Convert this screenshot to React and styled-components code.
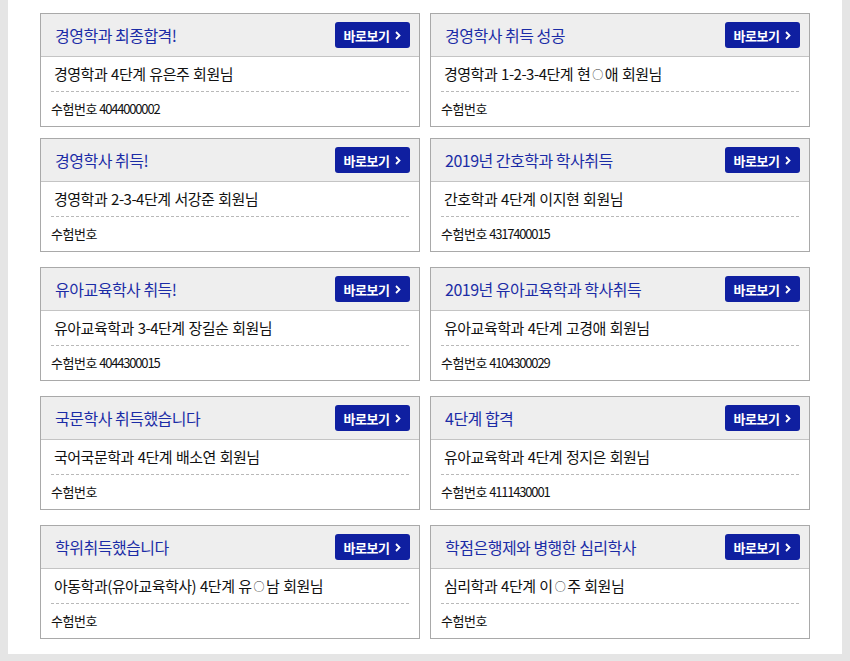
import styled, { createGlobalStyle } from "styled-components";

const GlobalStyle = createGlobalStyle`
  html, body {
    margin: 0;
    padding: 0;
    background: #e5e5e5;
    font-family: "Noto Sans CJK KR", "Noto Sans", sans-serif;
  }
`;

const Page = styled.div`
  margin: 0 8px;
  background: #fff;
  padding: 13px 32px 15px;
`;

const Grid = styled.ul`
  display: grid;
  grid-template-columns: 380px 380px;
  column-gap: 10px;
  row-gap: 15px;
  list-style: none;
  margin: 0;
  padding: 0;
`;

const Card = styled.li`
  border: 1px solid #a9a9a9;
  background: #fff;

  &:nth-child(-n + 2) {
    margin-bottom: -4px;
  }
`;

const CardHead = styled.div`
  display: flex;
  align-items: center;
  justify-content: space-between;
  height: 42px;
  padding: 0 9px 0 14px;
  background: #eeeeee;
  border-bottom: 1px solid #c4c4c4;
`;

const Title = styled.h3`
  margin: 0;
  font-size: 16px;
  font-weight: 400;
  letter-spacing: -0.5px;
  color: #1b2ca6;
`;

const ViewButton = styled.a`
  display: flex;
  align-items: center;
  justify-content: center;
  gap: 6px;
  width: 75px;
  height: 26px;
  border-radius: 3px;
  background: #0f1fa0;
  color: #fff;
  font-size: 13px;
  font-weight: 700;
  letter-spacing: -0.5px;
  text-decoration: none;
  cursor: pointer;
`;

const Chevron = styled.svg`
  width: 6px;
  height: 9px;
`;

const CardBody = styled.div`
  padding: 0 10px;
`;

const Name = styled.p`
  margin: 0;
  height: 34px;
  line-height: 34px;
  padding-left: 3px;
  font-size: 15px;
  letter-spacing: -0.5px;
  word-spacing: 1px;
  color: #111;
  border-bottom: 1px dashed #b9b9b9;
`;

const Mask = styled.span`
  font-size: 11px;
  margin: 0 2px;
  color: #333;
  vertical-align: 1px;
`;

const ExamNo = styled.p`
  margin: 0;
  height: 34px;
  line-height: 34px;
  font-size: 13px;
  letter-spacing: -0.5px;
  color: #111;

  span {
    letter-spacing: -1.2px;
  }
`;

const items = [
  { title: "경영학과 최종합격!", name: "경영학과 4단계 유은주 회원님", no: "4044000002" },
  { title: "경영학사 취득 성공", name: "경영학과 1-2-3-4단계 현○애 회원님", no: "" },
  { title: "경영학사 취득!", name: "경영학과 2-3-4단계 서강준 회원님", no: "" },
  { title: "2019년 간호학과 학사취득", name: "간호학과 4단계 이지현 회원님", no: "4317400015" },
  { title: "유아교육학사 취득!", name: "유아교육학과 3-4단계 장길순 회원님", no: "4044300015" },
  { title: "2019년 유아교육학과 학사취득", name: "유아교육학과 4단계 고경애 회원님", no: "4104300029" },
  { title: "국문학사 취득했습니다", name: "국어국문학과 4단계 배소연 회원님", no: "" },
  { title: "4단계 합격", name: "유아교육학과 4단계 정지은 회원님", no: "4111430001" },
  { title: "학위취득했습니다", name: "아동학과(유아교육학사) 4단계 유○남 회원님", no: "" },
  { title: "학점은행제와 병행한 심리학사", name: "심리학과 4단계 이○주 회원님", no: "" },
];

const renderName = (name) =>
  name.split("○").map((part, i) => (
    <span key={i}>
      {i > 0 && <Mask>○</Mask>}
      {part}
    </span>
  ));

export default function App() {
  return (
    <>
      <GlobalStyle />
      <Page>
        <Grid>
          {items.map((item, i) => (
            <Card key={i}>
              <CardHead>
                <Title>{item.title}</Title>
                <ViewButton>
                  바로보기
                  <Chevron viewBox="0 0 6 9">
                    <path d="M1 1l3.5 3.5L1 8" fill="none" stroke="#fff" strokeWidth="1.8" />
                  </Chevron>
                </ViewButton>
              </CardHead>
              <CardBody>
                <Name>{renderName(item.name)}</Name>
                <ExamNo>
                  수험번호 {item.no && <span>{item.no}</span>}
                </ExamNo>
              </CardBody>
            </Card>
          ))}
        </Grid>
      </Page>
    </>
  );
}
